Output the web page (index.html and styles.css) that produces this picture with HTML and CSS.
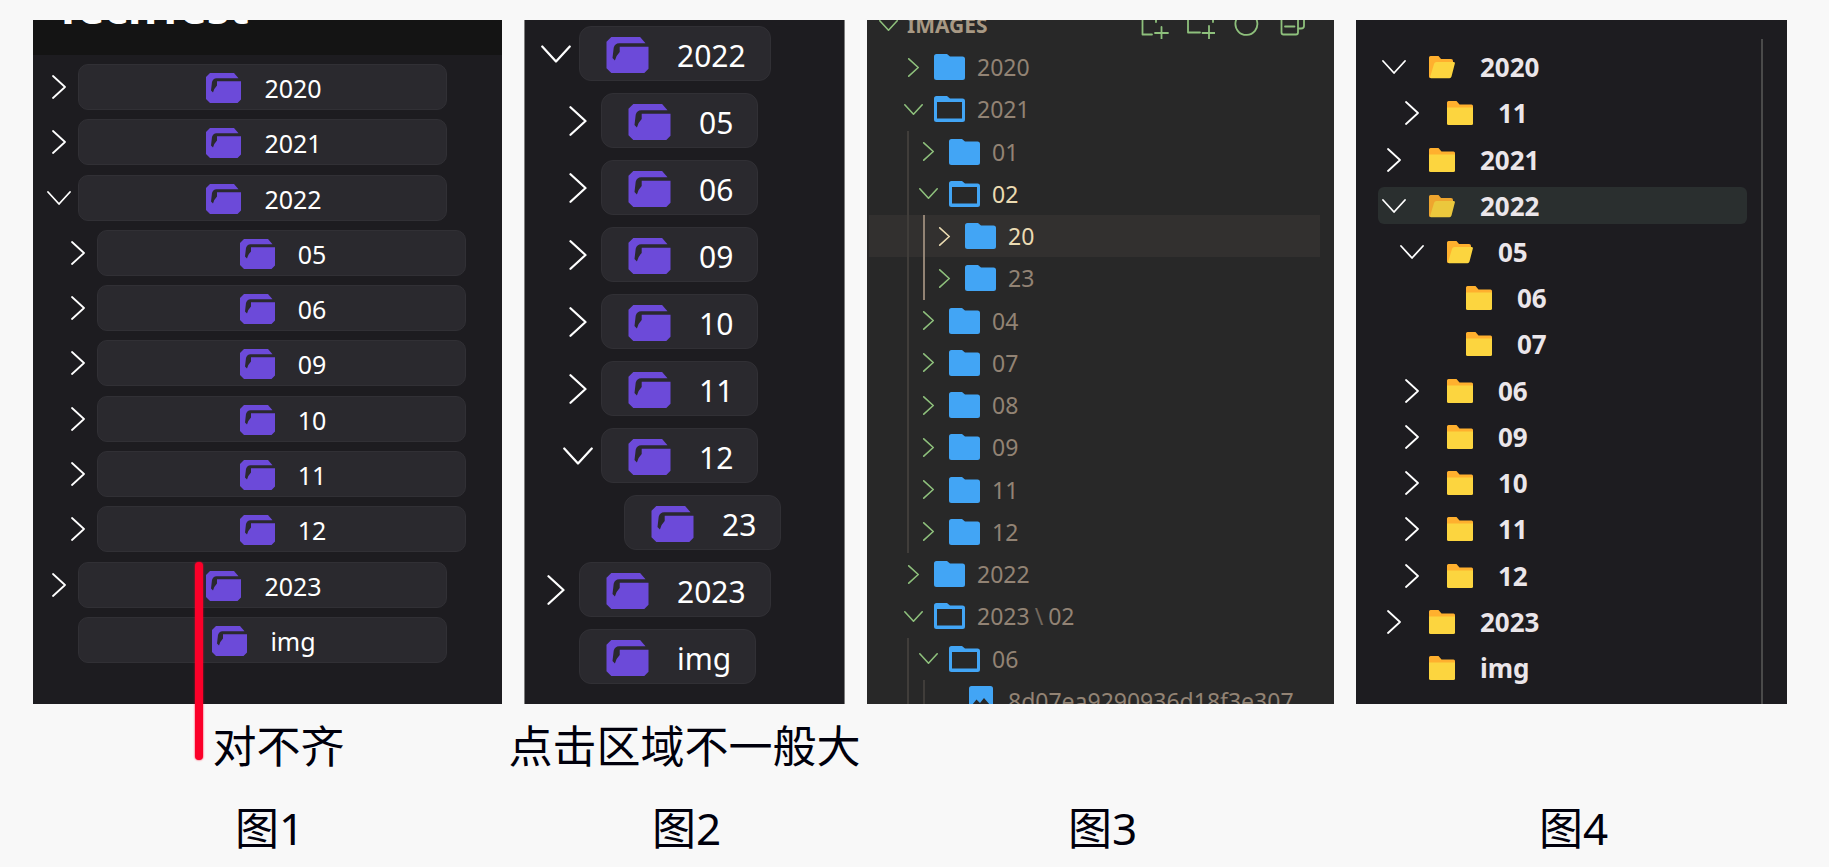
FILE: index.html
```html
<!DOCTYPE html>
<html lang="zh-CN">
<head>
<meta charset="utf-8">
<title>目录树对比</title>
<link rel="stylesheet" href="styles.css">
</head>
<body>
<svg class="sprite" aria-hidden="true">
  <symbol id="right" viewBox="0 0 24 24"><path d="M6 1L18 12L6 23" class="line"/></symbol>
  <symbol id="down" viewBox="0 0 24 24"><path d="M1 6L12 18L23 6" class="line"/></symbol>
  <symbol id="purple" viewBox="0 0 35 30"><path fill="#6c4ad9" d="M4 0H28L32.500 5.200H10.500Q7 5.300 6 9L5 17.500L7 19.500Q8 15.500 11 12.500V8.200H35V26.500L31.500 30H4L0 26V4Z"/></symbol>
  <symbol id="blue" viewBox="0 0 31 26"><path fill="#42a5f5" d="M2.500 0H13L16 2.500H28.500Q31 2.500 31 5V23.500Q31 26 28.500 26H2.500Q0 26 0 23.500V2.500Q0 0 2.500 0Z"/></symbol>
  <symbol id="blue-open" viewBox="0 0 31 26"><path fill="#42a5f5" fill-rule="evenodd" d="M2.500 0H13L16 2.500H28.500Q31 2.500 31 5V23.500Q31 26 28.500 26H2.500Q0 26 0 23.500V2.500Q0 0 2.500 0ZM3 6V22.500H28V6Z"/></symbol>
  <symbol id="picture" viewBox="0 0 24 30"><path fill="#42a5f5" fill-rule="evenodd" d="M2.500 0H21.500Q24 0 24 2.500V27.500Q24 30 21.500 30H2.500Q0 30 0 27.500V2.500Q0 0 2.500 0ZM3 24H21V19L15 12L11 17L7.500 13.500L3 19Z"/></symbol>
  <symbol id="yellow" viewBox="0 0 26 24"><path fill="#ffb02e" d="M1.500 0H9.500L12.500 3.500H24.500Q26 3.500 26 5V12H0V1.500Q0 0 1.500 0Z"/><path fill="#fcd53f" d="M0 6.500H26V22.500Q26 24 24.500 24H1.500Q0 24 0 22.500Z"/></symbol>
  <symbol id="yellow-open" viewBox="0 0 26 24"><path fill="#ffb02e" d="M1.500 1H9.500L12 4H22Q24 4 24 6V12L10 23H1.500Q0 23 0 21.500V2.500Q0 1 1.500 1Z"/><path fill="#fcd53f" d="M7.500 7H24.500Q26.300 7 25.800 8.800L22.500 21.500Q22 23.200 20.500 23.200H2Q.8 23 1.400 21L5 9Q5.500 7 7.500 7Z"/></symbol>
  <symbol id="new-file" viewBox="0 0 28 28"><path class="line" d="M11 23.500H1.500V1H10L15 6V11M10 1V7H15M20.500 16V28M14 22H27"/></symbol>
  <symbol id="new-folder" viewBox="0 0 28 28"><path class="line" d="M13 21.500H1V3H9L12 7H26V11M22 15V28M15.500 22H28"/></symbol>
  <symbol id="refresh" viewBox="0 0 28 28"><path class="line" d="M7 4A11 11 0 1 0 19 3.500M7 8V3H2"/></symbol>
  <symbol id="collapse" viewBox="0 0 28 28"><path class="line" d="M2.500 7.500H19V21.500Q19 23.500 17 23.500H4.500Q2.500 23.500 2.500 21.500ZM6 15.500H15.500M8 4V2H25V15Q25 17.500 22 17.500H19"/></symbol>
</svg>
<main class="board">
  <figure class="figure">
    <section class="panel pills wide">
      <header class="site"><h2>TechTest</h2></header>
      <ul class="tree">
        <li><svg class="chevron"><use href="#right"/></svg><button><svg class="icon"><use href="#purple"/></svg>2020</button></li>
        <li><svg class="chevron"><use href="#right"/></svg><button><svg class="icon"><use href="#purple"/></svg>2021</button></li>
        <li><svg class="chevron"><use href="#down"/></svg><button><svg class="icon"><use href="#purple"/></svg>2022</button></li>
        <li class="l1"><svg class="chevron"><use href="#right"/></svg><button><svg class="icon"><use href="#purple"/></svg>05</button></li>
        <li class="l1"><svg class="chevron"><use href="#right"/></svg><button><svg class="icon"><use href="#purple"/></svg>06</button></li>
        <li class="l1"><svg class="chevron"><use href="#right"/></svg><button><svg class="icon"><use href="#purple"/></svg>09</button></li>
        <li class="l1"><svg class="chevron"><use href="#right"/></svg><button><svg class="icon"><use href="#purple"/></svg>10</button></li>
        <li class="l1"><svg class="chevron"><use href="#right"/></svg><button><svg class="icon"><use href="#purple"/></svg>11</button></li>
        <li class="l1"><svg class="chevron"><use href="#right"/></svg><button><svg class="icon"><use href="#purple"/></svg>12</button></li>
        <li><svg class="chevron"><use href="#right"/></svg><button><svg class="icon"><use href="#purple"/></svg>2023</button></li>
        <li><svg class="chevron"></svg><button><svg class="icon"><use href="#purple"/></svg>img</button></li>
      </ul>
    </section>
    <figcaption><p class="note shifted">对不齐</p><p class="label">图1</p></figcaption>
    <span class="marker"></span>
  </figure>

  <figure class="figure">
    <section class="panel pills fit">
      <ul class="tree">
        <li><svg class="chevron"><use href="#down"/></svg><button><svg class="icon"><use href="#purple"/></svg>2022</button></li>
        <li class="l1"><svg class="chevron"><use href="#right"/></svg><button><svg class="icon"><use href="#purple"/></svg>05</button></li>
        <li class="l1"><svg class="chevron"><use href="#right"/></svg><button><svg class="icon"><use href="#purple"/></svg>06</button></li>
        <li class="l1"><svg class="chevron"><use href="#right"/></svg><button><svg class="icon"><use href="#purple"/></svg>09</button></li>
        <li class="l1"><svg class="chevron"><use href="#right"/></svg><button><svg class="icon"><use href="#purple"/></svg>10</button></li>
        <li class="l1"><svg class="chevron"><use href="#right"/></svg><button><svg class="icon"><use href="#purple"/></svg>11</button></li>
        <li class="l1"><svg class="chevron"><use href="#down"/></svg><button><svg class="icon"><use href="#purple"/></svg>12</button></li>
        <li class="l2"><svg class="chevron"></svg><button><svg class="icon"><use href="#purple"/></svg>23</button></li>
        <li><svg class="chevron"><use href="#right"/></svg><button><svg class="icon"><use href="#purple"/></svg>2023</button></li>
        <li><svg class="chevron"></svg><button><svg class="icon"><use href="#purple"/></svg>img</button></li>
      </ul>
    </section>
    <figcaption><p class="note">点击区域不一般大</p><p class="label">图2</p></figcaption>
  </figure>

  <figure class="figure">
    <section class="panel editor">
      <header class="explorer">
        <svg class="chevron"><use href="#down"/></svg><h2>IMAGES</h2>
        <div class="actions">
          <button aria-label="New file"><svg><use href="#new-file"/></svg></button>
          <button aria-label="New folder"><svg><use href="#new-folder"/></svg></button>
          <button aria-label="Refresh"><svg><use href="#refresh"/></svg></button>
          <button aria-label="Collapse"><svg><use href="#collapse"/></svg></button>
        </div>
      </header>
      <ul class="tree">
        <li><button><svg class="chevron"><use href="#right"/></svg><svg class="icon"><use href="#blue"/></svg>2020</button></li>
        <li><button><svg class="chevron"><use href="#down"/></svg><svg class="icon"><use href="#blue-open"/></svg>2021</button></li>
        <li class="l1"><button><svg class="chevron"><use href="#right"/></svg><svg class="icon"><use href="#blue"/></svg>01</button></li>
        <li class="l1 bright"><button><svg class="chevron"><use href="#down"/></svg><svg class="icon"><use href="#blue-open"/></svg>02</button></li>
        <li class="l2 lit bright selected"><button><svg class="chevron"><use href="#right"/></svg><svg class="icon"><use href="#blue"/></svg>20</button></li>
        <li class="l2 lit"><button><svg class="chevron"><use href="#right"/></svg><svg class="icon"><use href="#blue"/></svg>23</button></li>
        <li class="l1"><button><svg class="chevron"><use href="#right"/></svg><svg class="icon"><use href="#blue"/></svg>04</button></li>
        <li class="l1"><button><svg class="chevron"><use href="#right"/></svg><svg class="icon"><use href="#blue"/></svg>07</button></li>
        <li class="l1"><button><svg class="chevron"><use href="#right"/></svg><svg class="icon"><use href="#blue"/></svg>08</button></li>
        <li class="l1"><button><svg class="chevron"><use href="#right"/></svg><svg class="icon"><use href="#blue"/></svg>09</button></li>
        <li class="l1"><button><svg class="chevron"><use href="#right"/></svg><svg class="icon"><use href="#blue"/></svg>11</button></li>
        <li class="l1"><button><svg class="chevron"><use href="#right"/></svg><svg class="icon"><use href="#blue"/></svg>12</button></li>
        <li><button><svg class="chevron"><use href="#right"/></svg><svg class="icon"><use href="#blue"/></svg>2022</button></li>
        <li><button><svg class="chevron"><use href="#down"/></svg><svg class="icon"><use href="#blue-open"/></svg>2023<span class="slash">\</span>02</button></li>
        <li class="l1"><button><svg class="chevron"><use href="#down"/></svg><svg class="icon"><use href="#blue-open"/></svg>06</button></li>
        <li class="l2"><button><svg class="chevron"></svg><svg class="icon file"><use href="#picture"/></svg>8d07ea9290936d18f3e307</button></li>
      </ul>
    </section>
    <figcaption><p class="label">图3</p></figcaption>
  </figure>

  <figure class="figure">
    <section class="panel plain">
      <ul class="tree">
        <li><button><svg class="chevron"><use href="#down"/></svg><svg class="icon"><use href="#yellow-open"/></svg>2020</button></li>
        <li class="l1"><button><svg class="chevron"><use href="#right"/></svg><svg class="icon"><use href="#yellow"/></svg>11</button></li>
        <li><button><svg class="chevron"><use href="#right"/></svg><svg class="icon"><use href="#yellow"/></svg>2021</button></li>
        <li class="hovered"><button><svg class="chevron"><use href="#down"/></svg><svg class="icon"><use href="#yellow-open"/></svg>2022</button></li>
        <li class="l1"><button><svg class="chevron"><use href="#down"/></svg><svg class="icon"><use href="#yellow-open"/></svg>05</button></li>
        <li class="l2"><button><svg class="chevron"></svg><svg class="icon"><use href="#yellow"/></svg>06</button></li>
        <li class="l2"><button><svg class="chevron"></svg><svg class="icon"><use href="#yellow"/></svg>07</button></li>
        <li class="l1"><button><svg class="chevron"><use href="#right"/></svg><svg class="icon"><use href="#yellow"/></svg>06</button></li>
        <li class="l1"><button><svg class="chevron"><use href="#right"/></svg><svg class="icon"><use href="#yellow"/></svg>09</button></li>
        <li class="l1"><button><svg class="chevron"><use href="#right"/></svg><svg class="icon"><use href="#yellow"/></svg>10</button></li>
        <li class="l1"><button><svg class="chevron"><use href="#right"/></svg><svg class="icon"><use href="#yellow"/></svg>11</button></li>
        <li class="l1"><button><svg class="chevron"><use href="#right"/></svg><svg class="icon"><use href="#yellow"/></svg>12</button></li>
        <li><button><svg class="chevron"><use href="#right"/></svg><svg class="icon"><use href="#yellow"/></svg>2023</button></li>
        <li><button><svg class="chevron"></svg><svg class="icon"><use href="#yellow"/></svg>img</button></li>
      </ul>
    </section>
    <figcaption><p class="label">图4</p></figcaption>
  </figure>
</main>
</body>
</html>
```
FILE: styles.css
```css
* { box-sizing: border-box; }

body {
  margin: 0;
  background: #f8f8f8;
  color: #00000c;
  font-family: "Noto Sans", "Noto Sans CJK SC", sans-serif;
}

h2, p, ul, figure { margin: 0; padding: 0; }
ul { list-style: none; }

button {
  display: flex;
  align-items: center;
  border: 0;
  padding: 0;
  background: none;
  color: inherit;
  font: inherit;
  cursor: pointer;
}

svg { flex: none; }
.sprite { position: absolute; width: 0; height: 0; }
.line { fill: none; stroke: currentColor; stroke-linecap: round; stroke-linejoin: round; }

.board {
  display: grid;
  grid-template-columns: 469fr 321fr 467fr 431fr;
  gap: 22px;
  padding: 20px 42px 0 33px;
}

.figure { position: relative; display: flex; flex-direction: column; min-width: 0; }

.panel {
  flex: 1;
  display: flex;
  flex-direction: column;
  overflow: hidden;
  background: #1d1c20;
  color: #fff;
  white-space: nowrap;
}

.tree { flex: 1; display: flex; flex-direction: column; }
.tree li { display: flex; align-items: center; }

figcaption {
  display: flex;
  flex-direction: column;
  justify-content: flex-end;
  align-items: center;
  gap: 22px;
  min-height: 154px;
  font-size: 44px;
  line-height: 60px;
  white-space: nowrap;
}
.shifted { padding-left: 22px; }
.label { padding-left: 4px; }

.marker {
  position: absolute;
  left: 162px;
  top: 542px;
  width: 8px;
  height: 198px;
  border-radius: 4px;
  background: #fb0029;
  box-shadow: 0 0 2px #fb0029;
}

/* rounded rows */
.pills .chevron { stroke-width: 1.8; }
.pills button { border: 1px solid #313035; background: #2a292e; }

.site {
  display: flex;
  align-items: flex-end;
  height: 35px;
  padding: 0 22px 18px;
  background: #141414;
}
.site h2 { font-size: 45px; line-height: 60px; }

.wide { font-size: 25px; }
.wide .tree { justify-content: space-between; padding: 9px 55px 41px 14px; }
.wide .chevron { width: 24px; height: 24px; margin-right: 7px; }
.wide button { flex: 1; justify-content: center; gap: 23px; height: 46px; padding: 2px 0 0 3px; border-radius: 10px; }
.wide .icon { width: 35px; height: 30px; }
.wide .l1 { margin-left: 19px; margin-right: -19px; }

.fit { border: solid #7d7d7d; border-width: 0 1px; font-size: 30px; }
.fit .tree { gap: 12px; padding: 6px 16px 20px; }
.fit .chevron { width: 30px; height: 30px; margin-right: 8px; }
.fit button { gap: 28px; height: 55px; padding: 3px 24px 0 26px; border-radius: 12px; }
.fit .icon { width: 43px; height: 36px; }
.fit .l1 { margin-left: 22px; }
.fit .l2 { margin-left: 45px; }

/* editor explorer */
.editor { background: #282828; color: #928374; font-size: 23px; }
.editor .chevron { width: 19px; height: 19px; color: #8ec07c; stroke-width: 2; }
.explorer { display: flex; align-items: center; height: 42px; margin-top: -16px; padding: 0 27px 0 12px; }
.explorer h2 { margin-left: 9px; color: #a89984; font-size: 21px; }
.actions { display: flex; gap: 18px; margin-left: auto; color: #8ec07c; }
.actions svg { width: 28px; height: 28px; stroke-width: 1.8; }

.editor .tree { margin-bottom: -18px; padding: 0 14px 0 2px; }
.editor li { position: relative; flex: 1; min-height: 40px; padding-left: 35px; }
.editor .icon { width: 31px; height: 26px; margin: 0 12px 0 11px; }
.editor .file { width: 24px; height: 30px; margin: 0 15px; }
.editor .l1 { padding-left: 50px; }
.editor .l2 { padding-left: 66px; }
.editor .l1::before, .editor .l2::before, .editor .l2::after {
  content: "";
  position: absolute;
  top: 0;
  bottom: 0;
  left: 38px;
  width: 2px;
  background: #403d3a;
}
.editor .l2::after { left: 54px; }
.editor .lit::after { background: #928374; }
.editor .bright { color: #ebdbb2; }
.editor .selected { background: #32302f; }
.editor .selected .chevron { color: #ebdbb2; }
.slash { margin: 0 5px; opacity: .7; }

/* flat rows with a hover strip */
.plain { color: #ebe6ea; font-size: 26px; font-weight: 700; }
.plain .tree { margin: 19px 24px 0 0; padding: 5px 14px 13px 22px; border-right: 2px solid #4a4a4a; }
.plain li { flex: 1; min-height: 40px; }
.plain button { flex: 1; height: 37px; padding-left: 4px; border-radius: 6px; }
.plain .chevron { width: 24px; height: 24px; margin-right: 23px; color: #fff; stroke-width: 1.8; }
.plain .icon { width: 26px; height: 24px; margin-right: 25px; }
.plain .l1 button { padding-left: 22px; }
.plain .l2 button { padding-left: 41px; }
.plain .hovered button { background: #2a2f2f; }
.plain .hovered .icon { opacity: .92; }
```
